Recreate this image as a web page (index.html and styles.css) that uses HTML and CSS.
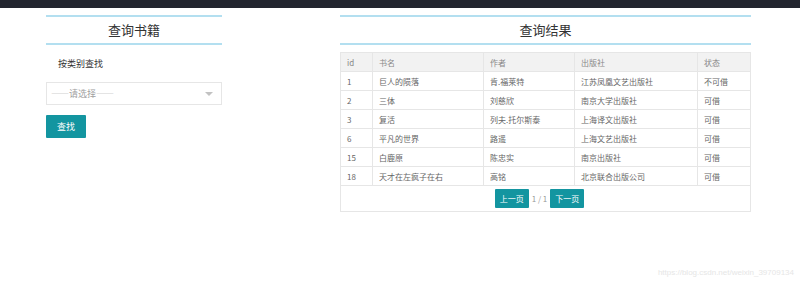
FILE: index.html
```html
<!DOCTYPE html>
<html lang="zh-CN">
<head>
  <meta charset="UTF-8" />
  <title>图书查询</title>
  <link rel="stylesheet" href="styles.css">
</head>
<body>
  <div class="topbar"></div>

  <div class="main">
    <div class="panel search">
      <h2 class="panel-title">查询书籍</h2>
      <div class="label">按类别查找</div>
      <div class="select">
        <span>——请选择——</span>
        <i class="caret"></i>
      </div>
      <button class="btn btn-search">查找</button>
    </div>

    <div class="panel result">
      <h2 class="panel-title">查询结果</h2>
      <div class="table-box">
        <table>
          <thead>
            <tr><th class="c-id">id</th><th class="c-name">书名</th><th class="c-author">作者</th><th class="c-pub">出版社</th><th>状态</th></tr>
          </thead>
          <tbody>
            <tr><td>1</td><td>巨人的陨落</td><td>肯.福莱特</td><td>江苏凤凰文艺出版社</td><td>不可借</td></tr>
            <tr><td>2</td><td>三体</td><td>刘慈欣</td><td>南京大学出版社</td><td>可借</td></tr>
            <tr><td>3</td><td>复活</td><td>列夫.托尔斯泰</td><td>上海译文出版社</td><td>可借</td></tr>
            <tr><td>6</td><td>平凡的世界</td><td>路遥</td><td>上海文艺出版社</td><td>可借</td></tr>
            <tr><td>15</td><td>白鹿原</td><td>陈忠实</td><td>南京出版社</td><td>可借</td></tr>
            <tr><td>18</td><td>天才在左疯子在右</td><td>高铭</td><td>北京联合出版公司</td><td>可借</td></tr>
          </tbody>
        </table>
        <div class="pager">
          <button class="btn btn-page">上一页</button>
          <span class="page-num">1 / 1</span>
          <button class="btn btn-page">下一页</button>
        </div>
      </div>
    </div>
  </div>

  <div class="watermark">https://blog.csdn.net/weixin_39709134</div>
</body>
</html>
```

FILE: styles.css
```css
body {
  margin: 0;
  background: #fff;
  font-family: "Noto Sans CJK SC", "Liberation Sans", sans-serif;
  color: #333;
  height: 283px;
  overflow: hidden;
}
.topbar {
  height: 8px;
  background: #23262f;
}
.main {
  display: flex;
  gap: 118px;
  padding-left: 46px;
  margin-top: 7px;
}
.panel-title {
  margin: 0;
  border-top: 2px solid #b3dff0;
  border-bottom: 2px solid #b3dff0;
  height: 26px;
  line-height: 26px;
  text-align: center;
  font-size: 13px;
  font-weight: normal;
  color: #333;
}
.search {
  width: 176px;
}
.label {
  font-size: 9px;
  padding-left: 12px;
  margin-top: 12px;
  line-height: 14px;
  color: #333;
}
.select {
  margin-top: 11px;
  height: 21px;
  border: 1px solid #e6e6e6;
  display: flex;
  align-items: center;
  justify-content: space-between;
  padding: 0 8px 0 4px;
  font-size: 9px;
  color: #a0a0a0;
}
.caret {
  width: 0;
  height: 0;
  border-left: 4px solid transparent;
  border-right: 4px solid transparent;
  border-top: 4px solid #c2c2c2;
}
.btn {
  border: none;
  background: #1395a0;
  color: #fff;
  font-family: inherit;
  padding: 0;
  cursor: pointer;
}
.btn-search {
  margin-top: 10px;
  width: 40px;
  height: 23px;
  font-size: 9px;
  border-radius: 1px;
}
.result {
  width: 411px;
}
.table-box {
  margin-top: 7px;
  border: 1px solid #e6e6e6;
}
table {
  width: 100%;
  border-collapse: collapse;
  font-size: 8px;
  color: #666;
}
th, td {
  height: 18px;
  padding: 0 0 0 6px;
  text-align: left;
  font-weight: normal;
  border-bottom: 1px solid #e6e6e6;
  border-left: 1px solid #e6e6e6;
}
th {
  color: #888;
}
th:first-child, td:first-child {
  border-left: none;
}
thead tr {
  background: #f2f2f2;
}
.c-id { width: 25px; }
.c-name { width: 104px; }
.c-author { width: 84px; }
.c-pub { width: 116px; }
.pager {
  height: 25px;
  display: flex;
  align-items: center;
  justify-content: center;
  gap: 3px;
  padding-right: 12px;
}
.btn-page {
  width: 34px;
  height: 19px;
  font-size: 8px;
  border-radius: 1px;
}
.page-num {
  font-size: 8px;
  color: #999;
}
.watermark {
  position: absolute;
  right: 6px;
  bottom: 6px;
  font-size: 8px;
  color: #e6e6e6;
  font-family: "Liberation Sans", sans-serif;
}
```
